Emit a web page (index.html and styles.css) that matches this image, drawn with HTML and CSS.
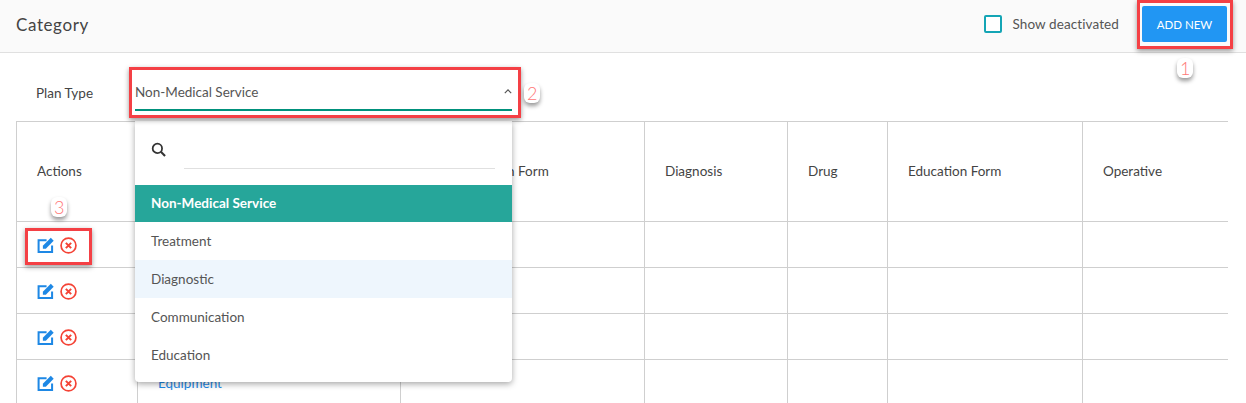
FILE: index.html
```html
<!DOCTYPE html>
<html lang="en">
<head>
<meta charset="utf-8">
<title>Category</title>
<link rel="stylesheet" href="styles.css">
</head>
<body>
<header class="topbar">
  <h1 class="title">Category</h1>
  <div class="top-actions">
    <label class="check"><span class="check-box"></span><span>Show deactivated</span></label>
    <button class="add-btn">ADD NEW</button>
  </div>
</header>
<section class="filter">
  <span class="filter-label">Plan Type</span>
  <div class="select">
    <span>Non-Medical Service</span>
    <svg class="chev" viewBox="0 0 10 6" width="8" height="5"><path d="M1 5l4-4 4 4" fill="none" stroke="#555" stroke-width="1.4"/></svg>
  </div>
</section>
<div class="table-wrap">
<table class="grid">
  <colgroup>
    <col class="c1"><col class="c2"><col class="c3"><col class="c4"><col class="c5"><col class="c6"><col class="c7">
  </colgroup>
  <thead>
    <tr><th>Actions</th><th></th><th>Communication Form</th><th>Diagnosis</th><th>Drug</th><th>Education Form</th><th>Operative</th></tr>
  </thead>
  <tbody>
    <tr><td class="act"><svg class="ic" viewBox="0 0 16 16"><path d="M14.2 8v6.2H1.5V3h7.5" fill="none" stroke="#1e88e5" stroke-width="1.9"/><path d="M5.5 11V8.2L13 .8l2.7 2.7L8.3 11z" fill="#1e88e5"/></svg><svg class="ic" viewBox="0 0 16 16"><circle cx="8" cy="8" r="7" fill="none" stroke="#f44336" stroke-width="1.6"/><path d="M5.5 5.5l5 5m0-5l-5 5" stroke="#f44336" stroke-width="1.9"/></svg></td><td></td><td></td><td></td><td></td><td></td><td></td></tr>
    <tr><td class="act"><svg class="ic" viewBox="0 0 16 16"><path d="M14.2 8v6.2H1.5V3h7.5" fill="none" stroke="#1e88e5" stroke-width="1.9"/><path d="M5.5 11V8.2L13 .8l2.7 2.7L8.3 11z" fill="#1e88e5"/></svg><svg class="ic" viewBox="0 0 16 16"><circle cx="8" cy="8" r="7" fill="none" stroke="#f44336" stroke-width="1.6"/><path d="M5.5 5.5l5 5m0-5l-5 5" stroke="#f44336" stroke-width="1.9"/></svg></td><td></td><td></td><td></td><td></td><td></td><td></td></tr>
    <tr><td class="act"><svg class="ic" viewBox="0 0 16 16"><path d="M14.2 8v6.2H1.5V3h7.5" fill="none" stroke="#1e88e5" stroke-width="1.9"/><path d="M5.5 11V8.2L13 .8l2.7 2.7L8.3 11z" fill="#1e88e5"/></svg><svg class="ic" viewBox="0 0 16 16"><circle cx="8" cy="8" r="7" fill="none" stroke="#f44336" stroke-width="1.6"/><path d="M5.5 5.5l5 5m0-5l-5 5" stroke="#f44336" stroke-width="1.9"/></svg></td><td></td><td></td><td></td><td></td><td></td><td></td></tr>
    <tr><td class="act"><svg class="ic" viewBox="0 0 16 16"><path d="M14.2 8v6.2H1.5V3h7.5" fill="none" stroke="#1e88e5" stroke-width="1.9"/><path d="M5.5 11V8.2L13 .8l2.7 2.7L8.3 11z" fill="#1e88e5"/></svg><svg class="ic" viewBox="0 0 16 16"><circle cx="8" cy="8" r="7" fill="none" stroke="#f44336" stroke-width="1.6"/><path d="M5.5 5.5l5 5m0-5l-5 5" stroke="#f44336" stroke-width="1.9"/></svg></td><td><a class="link" href="#">Equipment</a></td><td></td><td></td><td></td><td></td><td></td></tr>
  </tbody>
</table>
</div>
<div class="menu">
  <div class="menu-search">
    <svg class="search-ic" viewBox="0 0 16 16" width="15" height="15"><circle cx="6.8" cy="6.8" r="5" fill="none" stroke="#333" stroke-width="1.9"/><path d="M10.5 10.5L15 15" stroke="#333" stroke-width="2.2"/></svg>
    <span class="search-line"></span>
  </div>
  <ul class="options">
    <li class="opt selected">Non-Medical Service</li>
    <li class="opt">Treatment</li>
    <li class="opt hover">Diagnostic</li>
    <li class="opt">Communication</li>
    <li class="opt">Education</li>
  </ul>
</div>
<div class="mark m1"></div>
<div class="mark m2"></div>
<div class="mark m3"></div>
<span class="badge b1">1</span>
<span class="badge b2">2</span>
<span class="badge b3">3</span>
</body>
</html>
```
FILE: styles.css
```css
* { box-sizing: border-box; }
html, body { margin: 0; height: 403px; overflow: hidden; }
body { position: relative; background: #fff; color: #444; font-family: Lato, "Liberation Sans", Arial, sans-serif; font-size: 13.5px; }
.topbar { height: 53px; background: #fafafa; border-bottom: 1px solid #e0e0e0; display: flex; align-items: center; justify-content: space-between; padding: 0 19px 4px 16px; }
.title { margin: 0; font-size: 17px; font-weight: 400; letter-spacing: .6px; color: #444; }
.top-actions { display: flex; align-items: center; gap: 23px; }
.check { display: flex; align-items: center; gap: 10px; color: #555; letter-spacing: .1px; }
.check-box { width: 18px; height: 18px; border: 2px solid #14a5b5; border-radius: 2px; background: #fff; }
.add-btn { width: 85px; height: 36px; border: 0; border-radius: 2px; background: #2196f3; color: #fff; font: 400 11.5px Lato, "Liberation Sans", Arial, sans-serif; }
.filter { height: 68px; display: flex; align-items: flex-start; padding: 0 0 0 36px; }
.filter-label { width: 99px; margin-top: 32px; color: #444; }
.select { width: 377px; height: 41px; margin-top: 17px; padding: 14px 0 0; border-bottom: 2px solid #00917c; color: #555; display: flex; justify-content: space-between; align-items: flex-start; line-height: 17px; }
.chev { margin: 5px 0 0 0; }
.table-wrap { padding-left: 16px; width: 1227px; }
.grid { border-collapse: collapse; table-layout: fixed; width: 1211px; }
.c1 { width: 121px; } .c2 { width: 263px; } .c3 { width: 244px; } .c4 { width: 143px; } .c5 { width: 100px; } .c6 { width: 195px; } .c7 { width: 145px; }
.grid th, .grid td { border: 1px solid #cfcfcf; padding: 0 0 0 20px; text-align: left; font-weight: 400; color: #444; }
.grid th:last-child, .grid td:last-child { border-right: 0; }
.grid th { height: 100px; padding-bottom: 2px; }
.grid td { height: 46px; }
.ic { width: 17px; height: 17px; display: inline-block; vertical-align: middle; margin-right: 6px; }
.link { color: #1e88e5; text-decoration: none; }
.menu { position: absolute; left: 135px; top: 121px; width: 377px; height: 261px; background: #fff; border-radius: 0 0 4px 4px; box-shadow: 0 2px 6px rgba(0,0,0,.35); }
.menu-search { height: 64px; position: relative; }
.search-ic { position: absolute; left: 16px; top: 21px; }
.search-line { position: absolute; left: 49px; right: 17px; top: 47px; border-top: 1px solid #e0e0e0; }
.options { list-style: none; margin: 0; padding: 0; }
.opt { height: 38px; line-height: 38px; padding-left: 16px; color: #555; }
.selected { height: 37px; line-height: 37px; background: #26a69a; color: #fff; font-weight: 700; }
.hover { background: #eef6fd; }
.mark { position: absolute; border: 3px solid #f44045; box-shadow: 0 2px 5px rgba(0,0,0,.4); }
.m1 { left: 1137px; top: 0; width: 96px; height: 49px; }
.m2 { left: 129px; top: 67px; width: 392px; height: 51px; }
.m3 { left: 25px; top: 228px; width: 67px; height: 37px; }
.badge { position: absolute; padding: 0 3px; background: #fff; border-radius: 6px; color: #f77; font-size: 18px; font-weight: 300; line-height: 20px; box-shadow: 0 3px 4px rgba(0,0,0,.4); }
.b1 { left: 1177px; top: 58px; }
.b2 { left: 524px; top: 83px; }
.b3 { left: 51px; top: 197px; }
```
